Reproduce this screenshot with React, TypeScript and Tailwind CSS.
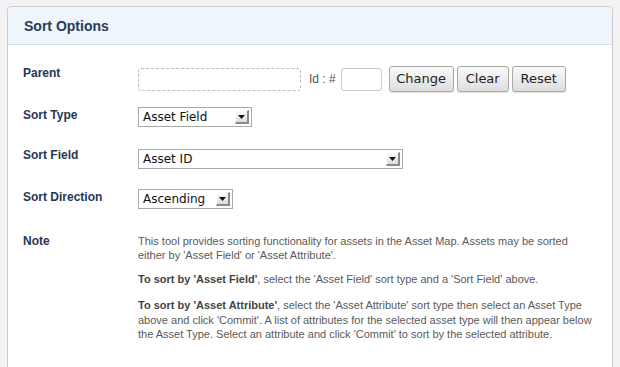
import React from "react";

const sans = { fontFamily: '"Liberation Sans", Arial, sans-serif' };
const ui = { fontFamily: '"DejaVu Sans", "Lucida Grande", sans-serif' };

function Select({ value, width }: { value: string; width: string }) {
  return (
    <div
      className={`${width} h-[20px] flex items-center justify-between border border-[#a9a9a9] bg-white pl-[4px] pr-[2px] text-[12px] text-[#111]`}
      style={ui}
    >
      <span className="leading-none">{value}</span>
      <span className="w-[14px] h-[14px] flex items-center justify-center bg-gradient-to-b from-[#fbfbfb] to-[#dcdcdc] border-r-2 border-b-2 border-[#8a8a8a] border-l border-t border-l-[#fff] border-t-[#fff]">
        <svg width="7" height="4" viewBox="0 0 7 4">
          <path d="M0 0h7L3.5 4z" fill="#111" />
        </svg>
      </span>
    </div>
  );
}

function Btn({ label, width }: { label: string; width: string }) {
  return (
    <button
      className={`${width} h-[26px] rounded-[3px] border border-[#a8a8a8] bg-gradient-to-b from-[#fafafa] to-[#dedede] text-[13px] text-[#222] shadow-[0_1px_1px_rgba(0,0,0,0.12)]`}
      style={ui}
    >
      {label}
    </button>
  );
}

function Label({ children, className = "" }: { children: React.ReactNode; className?: string }) {
  return (
    <div className={`w-[115px] shrink-0 text-[12px] leading-[14px] font-bold text-[#263654] ${className}`}>
      {children}
    </div>
  );
}

export default function App() {
  return (
    <div className="w-[620px] h-[367px] overflow-hidden bg-[#f3f3f3] pt-[6px] pl-[7px]" style={sans}>
      <div className="w-[606px] h-[400px] bg-white border border-[#cdcdcd] rounded-t-[4px]">
        <div className="h-[38px] bg-[#eef5fd] border-b border-[#d9dee4] rounded-t-[4px] flex items-center pl-[16px]">
          <h2 className="text-[14px] font-bold text-[#2a3a58] mt-[1px]">Sort Options</h2>
        </div>

        <div className="pl-[15px]">
          {/* Parent */}
          <div className="flex items-start mt-[21px] h-[26px]">
            <Label>Parent</Label>
            <div className="flex items-start">
              <div className="w-[163px] h-[23px] mt-[2px] rounded-[3px] border border-dashed border-[#bdbdbd]" />
              <span className="ml-[8px] mt-[6px] text-[12px] leading-[14px] text-[#555]">Id : #</span>
              <div className="ml-[5px] w-[41px] h-[23px] mt-[2px] rounded-[3px] border border-[#c8c8c8]" />
              <div className="ml-[7px] flex gap-[3px]">
                <Btn label="Change" width="w-[65px]" />
                <Btn label="Clear" width="w-[52px]" />
                <Btn label="Reset" width="w-[54px]" />
              </div>
            </div>
          </div>

          {/* Sort Type */}
          <div className="flex items-start mt-[15px]">
            <Label className="mt-[1px]">Sort Type</Label>
            <Select value="Asset Field" width="w-[114px]" />
          </div>

          {/* Sort Field */}
          <div className="flex items-start mt-[22px]">
            <Label className="mt-[-1px]">Sort Field</Label>
            <Select value="Asset ID" width="w-[265px]" />
          </div>

          {/* Sort Direction */}
          <div className="flex items-start mt-[20px]">
            <Label className="mt-[1px]">Sort Direction</Label>
            <Select value="Ascending" width="w-[95px]" />
          </div>

          {/* Note */}
          <div className="flex items-start mt-[25px]">
            <Label>Note</Label>
            <div className="w-[460px] text-[11px] leading-[14px] text-[#5a5a5a]">
              <p>
                This tool provides sorting functionality for assets in the Asset Map. Assets may be sorted
                either by 'Asset Field' or 'Asset Attribute'.
              </p>
              <p className="mt-[10px]">
                <b className="text-[#444]">To sort by 'Asset Field'</b>, select the 'Asset Field' sort type and a
                'Sort Field' above.
              </p>
              <p className="mt-[12px] leading-[14.5px]">
                <b className="text-[#444]">To sort by 'Asset Attribute'</b>, select the 'Asset Attribute' sort type
                then select an Asset Type above and click 'Commit'. A list of attributes for the selected asset
                type will then appear below the Asset Type. Select an attribute and click 'Commit' to sort by the
                selected attribute.
              </p>
            </div>
          </div>
        </div>
      </div>
    </div>
  );
}
